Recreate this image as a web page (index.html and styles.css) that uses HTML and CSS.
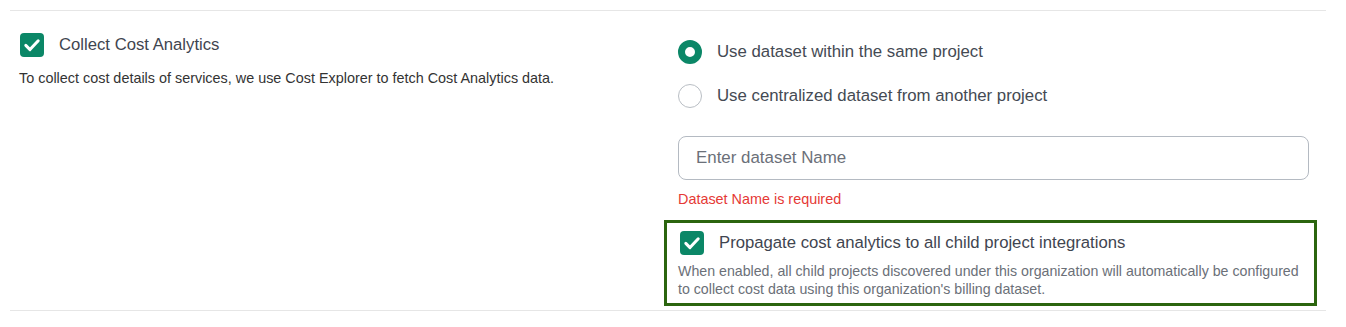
FILE: index.html
```html
<!DOCTYPE html>
<html lang="en">
<head>
    <meta charset="UTF-8">
    <meta name="viewport" content="width=device-width, initial-scale=1.0">
    <title>Cost Analytics</title>
    <link rel="stylesheet" href="styles.css">
</head>
<body>
    <div class="section">
        <div class="col col-left">
            <label class="check-row">
                <span class="checkbox">
                    <svg viewBox="0 0 24 24" width="24" height="24"><path d="M5.8 12.4l4.2 4.2 8.2-8.8" fill="none" stroke="#fff" stroke-width="3" stroke-linecap="round" stroke-linejoin="round"/></svg>
                </span>
                <span class="check-label">Collect Cost Analytics</span>
            </label>
            <p class="help">To collect cost details of services, we use Cost Explorer to fetch Cost Analytics data.</p>
        </div>

        <div class="col col-right">
            <div class="radio-group">
                <label class="radio-row">
                    <span class="radio checked"></span>
                    <span class="radio-label">Use dataset within the same project</span>
                </label>
                <label class="radio-row">
                    <span class="radio"></span>
                    <span class="radio-label">Use centralized dataset from another project</span>
                </label>
            </div>

            <input type="text" class="text-input" placeholder="Enter dataset Name">
            <p class="error">Dataset Name is required</p>

            <div class="highlight">
                <label class="check-row">
                    <span class="checkbox">
                        <svg viewBox="0 0 24 24" width="24" height="24"><path d="M5.8 12.4l4.2 4.2 8.2-8.8" fill="none" stroke="#fff" stroke-width="3" stroke-linecap="round" stroke-linejoin="round"/></svg>
                    </span>
                    <span class="check-label">Propagate cost analytics to all child project integrations</span>
                </label>
                <p class="sub-help">When enabled, all child projects discovered under this organization will automatically be configured to collect cost data using this organization's billing dataset.</p>
            </div>
        </div>
    </div>
</body>
</html>
```

FILE: styles.css
```css
* {
    box-sizing: border-box;
    margin: 0;
    padding: 0;
}
body {
    font-family: 'Liberation Sans', Arial, sans-serif;
    color: #3f4550;
    background-color: #fff;
    padding: 10px 20px 0 10px;
}
.section {
    display: grid;
    grid-template-columns: 658px 1fr;
    border-top: 1px solid #e6e6e6;
    border-bottom: 1px solid #e6e6e6;
}
.col-left {
    padding: 22px 10px 0 9px;
}
.col-right {
    padding: 29px 17px 4px 10px;
}
.check-row {
    display: flex;
    align-items: center;
    gap: 15px;
    padding-left: 1px;
}
.checkbox {
    width: 24px;
    height: 24px;
    border-radius: 4px;
    background-color: #0b8767;
    display: flex;
    flex-shrink: 0;
}
.check-label {
    font-size: 16.7px;
    line-height: 24px;
}
.help {
    margin-top: 12px;
    font-size: 14.4px;
    line-height: 18px;
    color: #333;
}
.radio-group {
    display: flex;
    flex-direction: column;
    gap: 20px;
}
.radio-row {
    display: flex;
    align-items: center;
    gap: 15px;
}
.radio {
    width: 24px;
    height: 24px;
    border-radius: 50%;
    border: 1px solid #b9bec4;
    background-color: #fff;
    flex-shrink: 0;
}
.radio.checked {
    border: 7px solid #0b8767;
}
.radio-label {
    font-size: 16.8px;
    line-height: 24px;
    color: #444a53;
}
.text-input {
    display: block;
    width: 100%;
    height: 44px;
    margin-top: 28px;
    padding: 0 17px;
    border: 1px solid #b4bac2;
    border-radius: 8px;
    font-family: inherit;
    font-size: 16.9px;
    color: #3f4550;
}
.text-input::placeholder {
    color: #6b7079;
}
.error {
    margin-top: 11px;
    font-size: 14.4px;
    line-height: 17px;
    color: #e53935;
}
.highlight {
    margin: 12px -8px 0 -14px;
    border: 3px solid #2b650f;
    padding: 8px 11px 5px 11px;
}
.highlight .check-row {
    padding-left: 2px;
}
.sub-help {
    margin-top: 7px;
    font-size: 14.2px;
    line-height: 18px;
    color: #6b7078;
}
```
